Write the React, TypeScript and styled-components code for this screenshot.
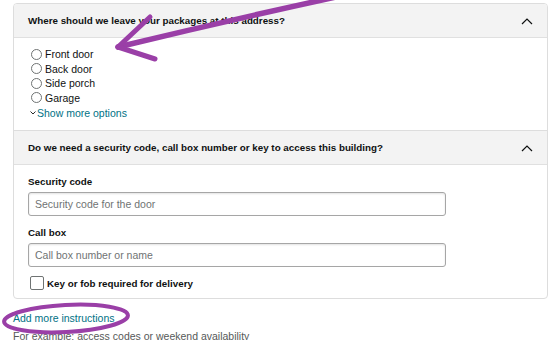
import React from "react";
import styled, { createGlobalStyle } from "styled-components";

const GlobalStyle = createGlobalStyle`
  body {
    margin: 0;
    background: #fff;
    font-family: "Liberation Sans", Arial, sans-serif;
    color: #0f1111;
  }
`;

const Page = styled.div`
  position: relative;
  width: 560px;
  height: 340px;
  overflow: hidden;
  padding: 3px 12px 0 13px;
  box-sizing: border-box;
`;

const Card = styled.div`
  border: 1px solid #dddddd;
  border-radius: 4px;
  overflow: hidden;
`;

const Section = styled.div`
  & + & {
    border-top: 1px solid #dddddd;
  }
`;

const Header = styled.div`
  height: 33px;
  background: #f3f3f3;
  border-bottom: 1px solid #e0e0e0;
  display: flex;
  align-items: center;
  justify-content: space-between;
  padding: 0 14px;
  font-size: 9.8px;
  font-weight: 700;
`;

const Body = styled.div<{ $pad: string }>`
  padding: ${(p) => p.$pad};
`;

const RadioList = styled.div`
  display: flex;
  flex-direction: column;
  gap: 2px;
`;

const RadioRow = styled.label`
  display: flex;
  align-items: center;
  gap: 3px;
  height: 12.5px;
  font-size: 10.5px;
`;

const RadioDot = styled.span`
  width: 9px;
  height: 9px;
  border: 1px solid #6f7373;
  border-radius: 50%;
  margin-left: 3px;
`;

const MoreLink = styled.a`
  display: flex;
  align-items: center;
  gap: 1px;
  margin-top: 3px;
  padding-left: 2px;
  font-size: 10.5px;
  color: #007185;
  text-decoration: none;
`;

const FieldLabel = styled.div`
  font-size: 9.8px;
  font-weight: 700;
  margin-bottom: 5px;
`;

const Field = styled.div`
  & + & {
    margin-top: 11px;
  }
`;

const Input = styled.input`
  display: block;
  width: 418px;
  height: 24px;
  box-sizing: border-box;
  border: 1px solid #a6a6a6;
  border-radius: 3px;
  box-shadow: 0 1px 2px rgba(15, 17, 17, 0.12) inset;
  padding: 0 6px;
  font-family: inherit;
  font-size: 10.5px;
  color: #0f1111;
  &::placeholder {
    color: #6f7373;
  }
`;

const CheckRow = styled.label`
  display: flex;
  align-items: center;
  gap: 3px;
  margin-top: 9px;
  font-size: 9.8px;
  font-weight: 700;
`;

const CheckBox = styled.span`
  width: 12px;
  height: 12px;
  border: 1px solid #6f7373;
  border-radius: 2px;
  margin-left: 2px;
`;

const Footer = styled.div`
  padding-top: 13px;
`;

const FooterLink = styled.a`
  display: block;
  font-size: 10.5px;
  color: #007185;
  text-decoration: none;
`;

const Hint = styled.div`
  margin-top: 6px;
  font-size: 10.5px;
  color: #565959;
`;

const Overlay = styled.svg`
  position: absolute;
  left: 0;
  top: 0;
  pointer-events: none;
`;

const ChevronUp = () => (
  <svg width="12" height="8" viewBox="0 0 12 8">
    <path d="M1 7 L6 2 L11 7" fill="none" stroke="#0f1111" strokeWidth="1.2" />
  </svg>
);

const ChevronDown = () => (
  <svg width="6" height="4" viewBox="0 0 6 4">
    <path d="M0.5 0.5 L3 3 L5.5 0.5" fill="none" stroke="#0f1111" strokeWidth="0.9" />
  </svg>
);

const places = ["Front door", "Back door", "Side porch", "Garage"];

export default function App() {
  return (
    <>
      <GlobalStyle />
      <Page>
        <Card>
          <Section>
            <Header>
              <span>Where should we leave your packages at this address?</span>
              <ChevronUp />
            </Header>
            <Body $pad="10px 14px 11px 14px">
              <RadioList>
                {places.map((p) => (
                  <RadioRow key={p}>
                    <RadioDot />
                    {p}
                  </RadioRow>
                ))}
              </RadioList>
              <MoreLink href="#">
                <ChevronDown />
                Show more options
              </MoreLink>
            </Body>
          </Section>
          <Section>
            <Header>
              <span>Do we need a security code, call box number or key to access this building?</span>
              <ChevronUp />
            </Header>
            <Body $pad="11px 14px 8px 14px">
              <Field>
                <FieldLabel>Security code</FieldLabel>
                <Input placeholder="Security code for the door" />
              </Field>
              <Field>
                <FieldLabel>Call box</FieldLabel>
                <Input placeholder="Call box number or name" />
              </Field>
              <CheckRow>
                <CheckBox />
                Key or fob required for delivery
              </CheckRow>
            </Body>
          </Section>
        </Card>
        <Footer>
          <FooterLink href="#">Add more instructions</FooterLink>
          <Hint>For example: access codes or weekend availability</Hint>
        </Footer>
        <Overlay width="560" height="340" viewBox="0 0 560 340">
          <g fill="none" stroke="#9a3fa7" strokeLinecap="round" strokeLinejoin="round">
            <path d="M336 -3 Q230 20 118 47" strokeWidth="5.5" />
            <path d="M118 47 L150 17" strokeWidth="5" />
            <path d="M118 47 L155 59" strokeWidth="5" />
            <ellipse cx="66" cy="318.5" rx="62" ry="13.5" transform="rotate(-3 66 318.5)" strokeWidth="4" />
          </g>
        </Overlay>
      </Page>
    </>
  );
}
